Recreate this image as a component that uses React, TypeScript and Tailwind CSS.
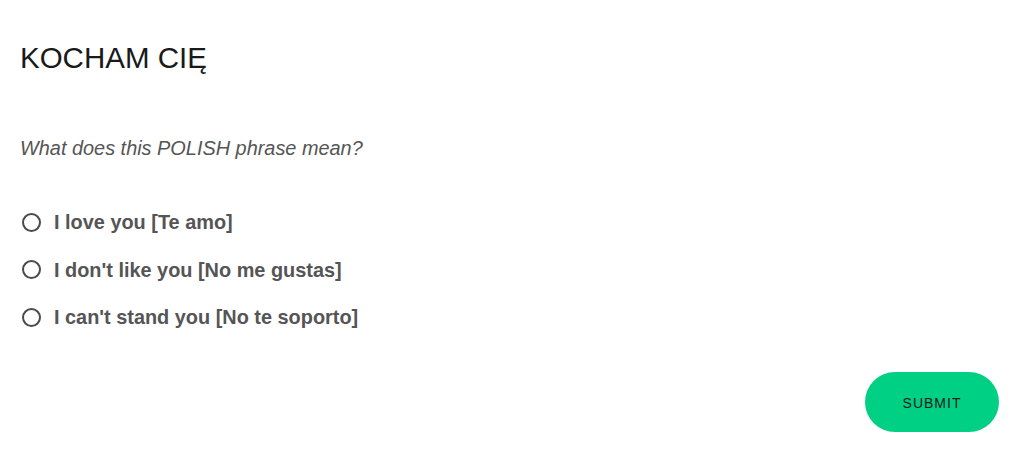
import React from 'react';

const options = [
  'I love you [Te amo]',
  "I don't like you [No me gustas]",
  "I can't stand you [No te soporto]",
];

export default function App() {
  return (
    <div className="min-h-[449px] w-full bg-white pl-5 pr-[25px] pt-10 font-['Liberation_Sans',Arial,sans-serif]">
      <h2 className="text-[29.5px] leading-[36px] font-normal text-[#1a1a1a]">KOCHAM CIĘ</h2>

      <p className="mt-[57px] text-[19.9px] leading-[30px] italic text-[#555555]">
        What does this POLISH phrase mean?
      </p>

      <div className="mt-[44px] flex flex-col gap-[17.5px]">
        {options.map((opt) => (
          <label key={opt} className="flex h-[30px] items-center">
            <input
              type="radio"
              name="answer"
              className="ml-[2px] mr-[13px] h-[19px] w-[19px] shrink-0 appearance-none rounded-full border-2 border-[#4a4a4a] bg-white"
            />
            <span className="text-[19.9px] leading-[30px] font-bold text-[#555555]">{opt}</span>
          </label>
        ))}
      </div>

      <div className="mt-[40px] flex justify-end">
        <button className="h-[60px] w-[134px] rounded-full bg-[#00d084] pt-[2px] text-[14px] tracking-[1px] text-[#1a1a1a]">
          SUBMIT
        </button>
      </div>
    </div>
  );
}
